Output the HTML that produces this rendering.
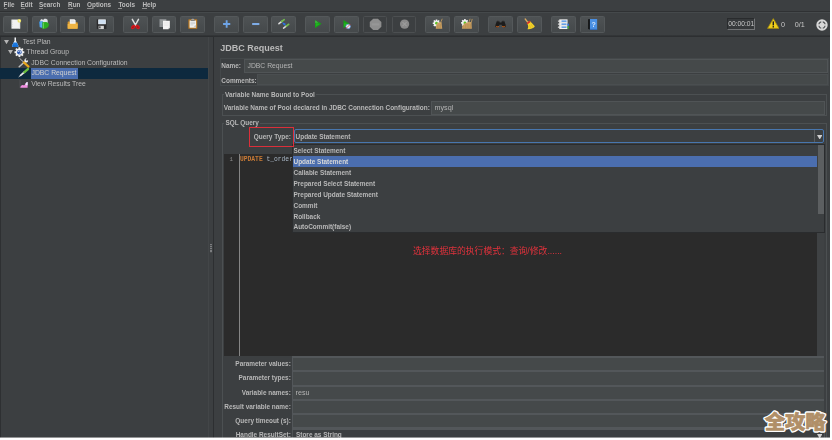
<!DOCTYPE html>
<html><head><meta charset="utf-8"><title>JMeter</title>
<style>
*{box-sizing:border-box;margin:0;padding:0}
html,body{width:832px;height:440px;overflow:hidden;background:#fff}
body{position:relative;font-family:"Liberation Sans","Noto Sans CJK SC",sans-serif;color:#bbb}
#app{position:absolute;left:0;top:0;width:830px;height:438px;background:#3c3f41;overflow:hidden;filter:blur(0.4px)}
.a{position:absolute;white-space:nowrap;line-height:1}
.b{font-weight:bold}
.menu{font-size:6.4px;font-weight:bold;color:#bcbcbc;top:2.2px}
.menu u{text-decoration:none;border-bottom:0.7px solid #8e8e8e}
.tb{position:absolute;top:16px;height:16.5px;width:24.8px;background:linear-gradient(#4e5254,#45494b);border:0.7px solid #54585a;border-radius:1.5px}
.tb.dis{background:#3c3f41;border-color:#4c4f51}
.tb svg{position:absolute;left:0;top:0;width:100%;height:100%}
.tree{font-size:6.8px;color:#bbb}
.lbl{font-size:6.45px;font-weight:bold;color:#b8b8b8}
.fld{position:absolute;background:#45494a;border:0.8px solid #505456}
.val{font-size:6.8px;color:#b4b4b4}
.grp{position:absolute;border:0.8px solid #4c5052}
.it{font-size:6.45px;font-weight:bold;color:#b8b8b8;left:293.5px}
</style></head><body>
<div id="app">
<!-- menu bar -->
<span class="a menu" style="left:3.5px"><u>F</u>ile</span>
<span class="a menu" style="left:20.6px"><u>E</u>dit</span>
<span class="a menu" style="left:39px"><u>S</u>earch</span>
<span class="a menu" style="left:68px"><u>R</u>un</span>
<span class="a menu" style="left:87px"><u>O</u>ptions</span>
<span class="a menu" style="left:118.4px"><u>T</u>ools</span>
<span class="a menu" style="left:142.4px"><u>H</u>elp</span>
<div class="a" style="left:0;top:10.6px;width:830px;height:1.5px;background:#2f3133"></div><div class="a" style="left:0;top:12.1px;width:830px;height:0.8px;background:#45494b"></div>
<div class="a" style="left:0;top:34.5px;width:830px;height:2.4px;background:linear-gradient(#383b3d,#2b2d2f 60%,#2e3032)"></div>

<!-- toolbar buttons -->
<div class="tb" style="left:3.0px"><svg viewBox="0 0 24.8 16.5"><rect x="7.9" y="2.9" width="10" height="10.4" fill="#f2f2f2"/><path d="M8.8 4.6h0.9M8.8 6.6h0.9M8.8 8.6h0.9M8.8 10.6h0.9" stroke="#c4c4c4" stroke-width="0.6"/><path d="M16.9 3v10.2" stroke="#dcdcdc" stroke-width="0.8"/><circle cx="16.9" cy="4.3" r="2.1" fill="#e9de62"/><circle cx="17" cy="4.2" r="0.9" fill="#fffbd8"/></svg></div>
<div class="tb" style="left:32.0px"><svg viewBox="0 0 24.8 16.5"><path d="M7.3 6.2l.5-2.7 1.6-1.3 1.5 1.3 1.4-1.5 2 .1 1.7 1 .3 3.6z" fill="#dfe3e6"/><path d="M6.4 5.2l4.2-.4v7.6l-3.4-.6z" fill="#2b8be2"/><path d="M7.6 5.6v6M9 5.4v6.6" stroke="#8fd0f8" stroke-width="0.6"/><path d="M10.1 6l4.2-.3c2.8.1 3.7 2.5 2.9 4.4-.8 2-3.3 3.3-7.1 3.5z" fill="#2cae20"/><path d="M11.2 6.5v6.4" stroke="#86e468" stroke-width="0.9"/></svg></div>
<div class="tb" style="left:60.3px"><svg viewBox="0 0 24.8 16.5"><path d="M7 5.8c0-.5.3-.8.8-.8h1.6l.8 1h7.5c.5 0 .8.3.8.8v5.9c0 .5-.3.8-.8.8h-9.9c-.5 0-.8-.3-.8-.8z" fill="#d49428"/><path d="M9.4 2.7h5.3l1.4 1.4v5.6h-6.7z" fill="#f6f6f6"/><path d="M10.4 4.3h3.6M10.4 5.5h4.7" stroke="#c4c8cc" stroke-width="0.5"/><path d="M7 8.3c0-.4.3-.7.7-.7h10.2c.4 0 .7.3.6.7l-.3 4.4c0 .5-.3.8-.8.8h-9.6c-.5 0-.8-.3-.8-.8z" fill="#efb545"/></svg></div>
<div class="tb" style="left:88.9px"><svg viewBox="0 0 24.8 16.5"><rect x="7.1" y="2.5" width="11.1" height="11.2" rx="0.7" fill="#2a2b2d"/><rect x="8.8" y="2.7" width="8.6" height="5.5" fill="#f4f6f8"/><rect x="9.3" y="3.3" width="7.6" height="4.5" fill="#cfe0f2"/><rect x="9.2" y="10" width="6" height="3.7" fill="#d4d4d4"/><rect x="9.9" y="10.6" width="1.5" height="2.2" fill="#343638"/></svg></div>
<div class="tb" style="left:123.1px"><svg viewBox="0 0 24.8 16.5"><path d="M8.9 2.7L12.6 9.4M15.9 2.7L12.2 9.4" stroke="#dedede" stroke-width="1.7" stroke-linecap="round"/><ellipse cx="9.9" cy="11.4" rx="2.8" ry="2.1" transform="rotate(-35 9.9 11.4)" fill="#d4181c"/><ellipse cx="15" cy="11.4" rx="2.8" ry="2.1" transform="rotate(35 15 11.4)" fill="#d4181c"/><ellipse cx="9.7" cy="11.6" rx="1" ry="0.5" transform="rotate(-35 9.7 11.6)" fill="#8a1014"/><ellipse cx="15.2" cy="11.6" rx="1" ry="0.5" transform="rotate(35 15.2 11.6)" fill="#8a1014"/></svg></div>
<div class="tb" style="left:151.6px"><svg viewBox="0 0 24.8 16.5"><rect x="6.8" y="2.4" width="7.8" height="9" fill="#8e9294"/><path d="M8 4.2h5.4M8 5.7h5.4M8 7.2h2.6" stroke="#a6a9ab" stroke-width="0.5"/><path d="M10.8 4.4h7.8v7.7l-1.7 1.7h-6.1z" fill="#f4f4f4"/><path d="M12 6.4h5M12 7.9h5M12 9.4h5" stroke="#e0e0e0" stroke-width="0.5"/><path d="M18.6 12.1l-1.7 1.7v-1.7z" fill="#bdbdbd"/></svg></div>
<div class="tb" style="left:180.2px"><svg viewBox="0 0 24.8 16.5"><rect x="7.8" y="2.7" width="10.1" height="10.8" rx="0.8" fill="#b97822"/><rect x="9.2" y="4" width="7.4" height="8.2" fill="#f0f0ee"/><path d="M10.2 6h5.4M10.2 7.5h5.4M10.2 9h3.2" stroke="#b4b8bc" stroke-width="0.6"/><path d="M13.8 10.4l2.8-1.2v3z" fill="#c4c4c4"/><path d="M10.9 4.1c0-1.3.7-2 1.95-2s1.95.7 1.95 2z" fill="#a2a2a2"/><rect x="10.6" y="3.5" width="4.5" height="1" fill="#7e7e7e"/></svg></div>
<div class="tb" style="left:214.4px"><svg viewBox="0 0 24.8 16.5"><path d="M12.7 3.8v8.3M8.6 7.95h8.2" stroke="#6ea4e6" stroke-width="2.1"/></svg></div>
<div class="tb" style="left:243.0px"><svg viewBox="0 0 24.8 16.5"><path d="M8.7 8h8.2" stroke="#7eace6" stroke-width="2.3"/></svg></div>
<div class="tb" style="left:271.4px"><svg viewBox="0 0 24.8 16.5"><path d="M7.3 7.6l3.4-2.6" stroke="#dcdcdc" stroke-width="1.7" stroke-linecap="round"/><path d="M10.5 5.1l2.8-2.1" stroke="#72bc4e" stroke-width="1.9" stroke-linecap="round"/><path d="M12.6 12.7l3.3-2.5" stroke="#dcdcdc" stroke-width="1.7" stroke-linecap="round"/><path d="M15.7 10.3l2.7-2" stroke="#72bc4e" stroke-width="1.9" stroke-linecap="round"/><path d="M10.9 6l3.9 1.5c.6 1.4-.7 2.6-2 2z" fill="#2a74e4"/></svg></div>
<div class="tb" style="left:305.4px"><svg viewBox="0 0 24.8 16.5"><path d="M9.7 3.3l7.5 4.5-7.5 5.1z" fill="#1a9c1a"/><path d="M10.5 6.5l4.5 1.5-4.5 3.2z" fill="#22c022" opacity="0.7"/><path d="M9.9 3.6l3.6 2.6-3.6 .6z" fill="#58b858" opacity="0.7"/></svg></div>
<div class="tb" style="left:334.0px"><svg viewBox="0 0 24.8 16.5"><path d="M9 3.3l7 4.5-7 5.1z" fill="#1a9c1a"/><path d="M9.8 6.5l4 1.5-4 3z" fill="#22c022" opacity="0.7"/><circle cx="14.4" cy="10.8" r="2.6" fill="#e6eefa" stroke="#5a90dc" stroke-width="0.7"/><path d="M11.7 13.4l5.2-5.3" stroke="#d63030" stroke-width="0.8"/></svg></div>
<div class="tb dis" style="left:362.7px"><svg viewBox="0 0 24.8 16.5"><path d="M9.9 1.9h5.4l3.9 3.9v5.2l-3.9 3.9h-5.4l-3.9-3.9v-5.2z" fill="#8e8e8e"/><path d="M8.3 7.2h8.6v2.4h-8.6z" fill="#979797"/></svg></div>
<div class="tb dis" style="left:391.5px"><svg viewBox="0 0 24.8 16.5"><circle cx="12.6" cy="8.1" r="5.3" fill="#8a8a8a"/><path d="M10.3 5.8l4.6 4.6M14.9 5.8l-4.6 4.6" stroke="#9c9c9c" stroke-width="1.3"/></svg></div>
<div class="tb" style="left:425.4px"><svg viewBox="0 0 24.8 16.5"><g transform="translate(11.4 7.1)"><circle r="3.2" fill="#f2f2f2"/><g stroke="#f2f2f2" stroke-width="1.8"><path d="M0-4.3V4.3M-4.3 0H4.3M-3.05-3.05L3.05 3.05M-3.05 3.05L3.05-3.05"/></g><circle r="1.6" fill="#5cc428"/></g><path d="M17.9 2l-1.7 4" stroke="#c8a060" stroke-width="0.9"/><path d="M12.3 6.6l4.8-1 .8 7.9h-7.4l.4-3.5z" fill="#c89e62"/><path d="M12.6 9.5v3.8M14.3 8.5v4.8M16 8v5.3" stroke="#ac8244" stroke-width="0.5"/></svg></div>
<div class="tb" style="left:454.0px"><svg viewBox="0 0 24.8 16.5"><g transform="translate(10.7 6.7)"><circle r="3.2" fill="#f2f2f2"/><g stroke="#f2f2f2" stroke-width="1.8"><path d="M0-4.3V4.3M-4.3 0H4.3M-3.05-3.05L3.05 3.05M-3.05 3.05L3.05-3.05"/></g><circle r="1.6" fill="#5cc428"/></g><path d="M16.6 2l-1.3 4M19 2.2l-1 4" stroke="#c8a060" stroke-width="0.9"/><path d="M10.4 7l4.2-1.2 3.6-.2.4 7.9h-11.3l.5-3.6z" fill="#c89e62"/><path d="M9.5 10v3.3M11.4 8.5v4.8M13.3 8v5.3M15.2 8v5.3M17 8v5.3" stroke="#ac8244" stroke-width="0.5"/></svg></div>
<div class="tb" style="left:488.2px"><svg viewBox="0 0 24.8 16.5"><path d="M8.4 4.6c.3-1 2.3-1 2.6 0l.6 1.6h2l.6-1.6c.3-1 2.3-1 2.6 0l2 5.4c.6 2-3.8 2.6-4.4.6l-.5-1.7h-2.6l-.5 1.7c-.6 2-5 1.4-4.4-.6z" fill="#1c1c1c"/><path d="M7.2 10.4c.8 1 2.7 1 3.5.2M14.5 10.6c.8.8 2.7.8 3.5-.2" stroke="#e06a18" stroke-width="1.1" fill="none"/><path d="M9 4.5h1.6M14.6 4.5h1.6" stroke="#6a6a6a" stroke-width="0.7"/></svg></div>
<div class="tb" style="left:516.9px"><svg viewBox="0 0 24.8 16.5"><path d="M7.6 2.3l3.7 4.7" stroke="#d8a860" stroke-width="1.5" stroke-linecap="round"/><path d="M9.4 6.7l3.4-2.3 5.8 6.2c-1 2-4.4 3.7-8.4 3.3 1.4-2.4 1-5-.8-7.2z" fill="#f2d22a"/><path d="M12.6 9l1.2 4.3M14.6 8.3l1.7 3.8" stroke="#d0a818" stroke-width="0.5"/><path d="M9.2 6.9l3.5-2.5 1.1 1.2-3.6 2.6z" fill="#d82828"/></svg></div>
<div class="tb" style="left:551.1px"><svg viewBox="0 0 24.8 16.5"><rect x="7.7" y="2.7" width="9.4" height="11" fill="#f6f6f6"/><path d="M6.8 4.6h2M6.8 8.1h2M6.8 11.6h2" stroke="#e0e0e0" stroke-width="1.5" stroke-linecap="round"/><path d="M10.2 4.6h5.8M10.2 8.1h5.8M10.2 11.6h5.8" stroke="#3a84e0" stroke-width="1.5"/><path d="M7.7 6.3h9.4M7.7 9.8h9.4" stroke="#c8c8c8" stroke-width="0.5"/><rect x="17" y="7.6" width="1.8" height="2.4" fill="#2a70d8"/><rect x="17" y="10.4" width="1.8" height="2.8" fill="#3aa838"/></svg></div>
<div class="tb" style="left:579.8px"><svg viewBox="0 0 24.8 16.5"><path d="M7.5 2.6l2.6-.2v12l-2.6-.8z" fill="#141414"/><rect x="9.6" y="2.3" width="8.2" height="12.1" fill="#4a90e4"/><path d="M9.6 13.5h8.2v0.9h-8.2z" fill="#2a68c0"/><text x="13.8" y="11.2" font-size="8" font-weight="bold" font-family="Liberation Sans, sans-serif" fill="#cfe2fa" text-anchor="middle">?</text></svg></div>

<!-- timer etc -->
<div class="a" style="left:726.5px;top:18.2px;width:28.5px;height:11.9px;background:#36393b;border:1px solid;border-color:#292b2d #737577 #737577 #292b2d"></div>
<span class="a" style="left:728.2px;top:20.8px;font-size:6.7px;color:#c8c8c8">00:00:01</span>
<svg class="a" style="left:766.5px;top:18.4px" width="12.6" height="11" viewBox="0 0 12.6 11"><path d="M6.3 0.6 L12.1 10.4 L0.5 10.4 Z" fill="#efcf1c" stroke="#9a8410" stroke-width="0.8" stroke-linejoin="round"/><rect x="5.6" y="3.4" width="1.4" height="4" fill="#1c1c1c"/><rect x="5.6" y="8.1" width="1.4" height="1.4" fill="#1c1c1c"/></svg>
<span class="a" style="left:781px;top:21.4px;font-size:7.2px;color:#c8c8c8">0</span>
<span class="a" style="left:794.8px;top:21.4px;font-size:7.2px;color:#c8c8c8">0/1</span>
<svg class="a" style="left:816px;top:18.6px" width="12" height="12" viewBox="0 0 12 12"><circle cx="6" cy="6" r="5.7" fill="#d8d8d8"/><circle cx="6" cy="6" r="3.1" fill="none" stroke="#55585a" stroke-width="1.1"/><path d="M6 1.2V4.2M6 7.8V10.8M1.2 6H4.2M7.8 6H10.8" stroke="#d8d8d8" stroke-width="1.5"/></svg>

<!-- tree -->
<div class="a" style="left:0;top:36.5px;width:1px;height:402px;background:#2e3032"></div>
<div class="a" style="left:0;top:68px;width:207.6px;height:10.5px;background:#0d293e"></div>
<div class="a" style="left:30.7px;top:68px;width:47.3px;height:10.5px;background:#4b6eaf"></div>
<span class="a tree" style="left:22.7px;top:39px">Test Plan</span>
<span class="a tree" style="left:26.6px;top:49px">Thread Group</span>
<span class="a tree" style="left:31.2px;top:60px">JDBC Connection Configuration</span>
<span class="a tree" style="left:31.5px;top:70px;color:#d0d0d0">JDBC Request</span>
<span class="a tree" style="left:31.2px;top:81px">View Results Tree</span>
<svg class="a" style="left:3.6px;top:39.6px" width="5" height="4.2" viewBox="0 0 5 4.2"><path d="M0 0H5L2.5 4.2Z" fill="#b4b4b4"/></svg>
<svg class="a" style="left:8px;top:49.8px" width="5" height="4.2" viewBox="0 0 5 4.2"><path d="M0 0H5L2.5 4.2Z" fill="#b4b4b4"/></svg>
<svg class="a" style="left:0;top:36px" width="40" height="56" viewBox="0 36 40 56">
<!-- flask -->
<path d="M14.5 37.4h1.5v3.4l2.3 4.7c.4.8 0 1.4-.8 1.4h-4.6c-.8 0-1.2-.6-.8-1.4l2.4-4.7z" fill="#eef2f6"/>
<path d="M13.6 42.6h3.3l1.4 2.9c.4.8 0 1.4-.8 1.4h-4.6c-.8 0-1.2-.6-.8-1.4z" fill="#1b7ae2"/>
<path d="M13 45.8c1.5.6 3 .6 4.5 0" stroke="#0f56b8" stroke-width="0.6" fill="none"/>
<!-- gear -->
<g transform="translate(19.4 52.2)"><circle r="3.6" fill="#f0f0f0"/><g stroke="#f0f0f0" stroke-width="1.9"><path d="M0-4.9V4.9M-4.9 0H4.9M-3.5-3.5L3.5 3.5M-3.5 3.5L3.5-3.5"/></g><circle r="2.3" fill="#2a56ac"/><path d="M-1.2-.2a1.3 1.3 0 1 1 1.4 1.5" stroke="#e4ecfa" stroke-width="0.8" fill="none"/></g>
<!-- tools -->
<path d="M19.2 66.7l6.2-5.6" stroke="#bcbcbc" stroke-width="1.5" stroke-linecap="round"/>
<path d="M24.6 61.6c-.8-1.6.3-3.4 2.1-3.3l-1.1 1.4.8 1.1 1.7-.6c.3 1.7-1.5 2.9-3 2.1z" fill="#ececec"/>
<path d="M19.8 58.5l4 3.8" stroke="#c4c4c4" stroke-width="1" stroke-linecap="round"/>
<path d="M23.8 62.4l4.7 4.2" stroke="#e8a61c" stroke-width="2.1" stroke-linecap="round"/>
<!-- pipette -->
<path d="M19 76.7l2-1.7" stroke="#d0d0d0" stroke-width="0.9" stroke-linecap="round"/>
<path d="M20.6 75.4l3.9-3.4" stroke="#e6e6e6" stroke-width="1.7" stroke-linecap="round"/>
<path d="M24.4 72.2l3.5-3.1" stroke="#6cc040" stroke-width="2.4" stroke-linecap="round"/>
<!-- results -->
<path d="M20 79.8v8.2" stroke="#5c5f61" stroke-width="0.5"/>
<path d="M20.3 87.8c.3-2 1.6-3 3-2.6 1 .3 1.5-.4 2.2-1.8.5-1 1.4-1.6 2.1-1.5v5.9z" fill="#f08ee0"/>
<path d="M25.3 84.2c.4-1.3 1.3-2.4 2.3-2.3v3.3c-.8.3-1.7-.1-2.3-1z" fill="#e6f0fc"/>
</svg>

<!-- divider -->
<div class="a" style="left:207.6px;top:36.6px;width:1.2px;height:402px;background:#434648"></div>
<div class="a" style="left:213.2px;top:35.6px;width:1px;height:403px;background:#2d2f31"></div>
<div class="a" style="left:213.2px;top:35.8px;width:617px;height:1.2px;background:#2d2f31"></div>
<div class="a" style="left:210px;top:244px;width:2px;height:8.6px;background:repeating-linear-gradient(#7c7e80 0 1.2px,#4a4d4f 1.2px 2.15px)"></div>

<!-- right panel -->
<span class="a b" style="left:220.2px;top:43.6px;font-size:9px;color:#bababa">JDBC Request</span>
<div class="grp" style="left:219.8px;top:57.6px;width:609px;height:28.8px;border-color:#44484a"></div>
<span class="a lbl" style="left:221.3px;top:63px">Name:</span>
<div class="fld" style="left:244px;top:58.8px;width:584px;height:14px"></div>
<span class="a val" style="left:247.5px;top:63px">JDBC Request</span>
<span class="a lbl" style="left:221.3px;top:78px">Comments:</span>
<div class="fld" style="left:257.1px;top:74.4px;width:571px;height:11px;border-color:#4a4e50"></div>

<div class="grp" style="left:221.6px;top:93.8px;width:605.6px;height:22.6px"></div>
<span class="a lbl" style="left:224.1px;top:92px;background:#3c3f41;padding:0 1px;line-height:0.8">Variable Name Bound to Pool</span>
<span class="a lbl" style="left:223.8px;top:105px">Variable Name of Pool declared in JDBC Connection Configuration:</span>
<div class="fld" style="left:430.8px;top:101.2px;width:394px;height:13.4px"></div>
<span class="a val" style="left:434.5px;top:104.4px;font-size:7.2px">mysql</span>

<div class="grp" style="left:221.6px;top:123px;width:605.6px;height:330px"></div>
<span class="a lbl" style="left:224.4px;top:120.4px;background:#3c3f41;padding:0 1px;line-height:0.8">SQL Query</span>

<!-- editor -->
<div class="a" style="left:224px;top:154px;width:592.8px;height:202px;background:#2b2b2b"></div>
<div class="a" style="left:816.8px;top:154px;width:7.2px;height:202px;background:#3f4244"></div>
<div class="a" style="left:239.1px;top:154px;width:0.9px;height:202px;background:#858585"></div>
<span class="a" style="left:229.4px;top:157.2px;font-size:5.8px;font-family:'Liberation Mono','DejaVu Sans Mono',monospace;color:#8a8a8a">1</span>
<span class="a" style="left:240px;top:156.8px;font-size:6.3px;font-family:'Liberation Mono','DejaVu Sans Mono',monospace;color:#a9b7c6"><b style="color:#c87a36">UPDATE</b> t_order SET status = 1</span>
<span class="a" style="left:413px;top:246.6px;font-size:8.8px;color:#e0323c;font-family:'Liberation Sans','Noto Sans CJK SC',sans-serif">选择数据库的执行模式：查询/修改......</span>

<!-- query type -->
<span class="a lbl" style="left:253.8px;top:133.6px">Query Type:</span>
<div class="a" style="left:293.6px;top:128.8px;width:530.6px;height:14.4px;background:#3c3f41;border:1.3px solid #4876ae;border-radius:2px"></div>
<div class="a" style="left:813.5px;top:130px;width:0.7px;height:12.4px;background:#5a5d5f"></div>
<svg class="a" style="left:816.8px;top:134.6px" width="5.4" height="4.6" viewBox="0 0 5.4 4.6"><path d="M0 0H5.4L2.7 4.6Z" fill="#d0d0d0"/></svg>
<span class="a lbl" style="left:295.6px;top:133.6px">Update Statement</span>

<!-- popup -->
<div class="a" style="left:292px;top:144px;width:532.6px;height:89px;background:#3c3f41;border:0.9px solid #2a2c2e"></div>
<div class="a" style="left:292.9px;top:156.2px;width:524.2px;height:10.8px;background:#4b6eaf"></div>
<div class="a" style="left:818.4px;top:145px;width:5.4px;height:69.4px;background:#5c5f61"></div>
<span class="a it" style="top:148px">Select Statement</span>
<span class="a it" style="top:159px;color:#d8d8d8">Update Statement</span>
<span class="a it" style="top:170px">Callable Statement</span>
<span class="a it" style="top:181px">Prepared Select Statement</span>
<span class="a it" style="top:192px">Prepared Update Statement</span>
<span class="a it" style="top:203px">Commit</span>
<span class="a it" style="top:214px">Rollback</span>
<span class="a it" style="top:224.4px">AutoCommit(false)</span>

<div class="a" style="left:248.7px;top:126.5px;width:45.5px;height:20px;border:1.7px solid #dc2f3a"></div>
<!-- bottom fields -->
<span class="a lbl" style="right:539.2px;top:361px">Parameter values:</span>
<span class="a lbl" style="right:539.2px;top:375.2px">Parameter types:</span>
<span class="a lbl" style="right:539.2px;top:389.6px">Variable names:</span>
<span class="a lbl" style="right:539.2px;top:403.8px">Result variable name:</span>
<span class="a lbl" style="right:539.2px;top:418px">Query timeout (s):</span>
<span class="a lbl" style="right:539.2px;top:432.4px">Handle ResultSet:</span>
<div class="a" style="left:292px;top:356.0px;width:532.4px;height:73.9px;background:#53575a"></div>
<div class="a" style="left:292.8px;top:358.0px;width:530.8px;height:12.4px;background:#45494a"></div>
<div class="a" style="left:292.8px;top:372.4px;width:530.8px;height:12.4px;background:#45494a"></div>
<div class="a" style="left:292.8px;top:386.8px;width:530.8px;height:12.3px;background:#45494a"></div>
<div class="a" style="left:292.8px;top:401.1px;width:530.8px;height:12.1px;background:#45494a"></div>
<div class="a" style="left:292.8px;top:415.2px;width:530.8px;height:12.3px;background:#45494a"></div>
<div class="a" style="left:292px;top:429.9px;width:0.8px;height:9px;background:#505456"></div><div class="a" style="left:823.6px;top:429.9px;width:0.8px;height:9px;background:#505456"></div>
<span class="a val" style="left:295.6px;top:389.4px;font-size:7.2px">resu</span>
<span class="a lbl" style="left:296px;top:432.4px">Store as String</span>
<svg class="a" style="left:816.8px;top:433.6px" width="5.4" height="4.6" viewBox="0 0 5.4 4.6"><path d="M0 0H5.4L2.7 4.6Z" fill="#d0d0d0"/></svg>

<!-- watermark -->
</div>
<svg class="a" style="left:756px;top:402px" width="80" height="40" viewBox="0 0 80 40"><g transform="translate(0 26.8) scale(1 .93) translate(0 -26.8)" font-family="Liberation Sans, Noto Sans CJK SC, sans-serif" font-weight="900" font-size="20.4" stroke-linejoin="round" letter-spacing="-0.2"><text x="8.8" y="26.8" fill="#fff" stroke="#fff" stroke-width="3.5">全攻略</text><text x="8.8" y="26.8" fill="#b08f68" stroke="#b08f68" stroke-width="0.7">全攻略</text></g></svg>
<div class="a" style="left:0;top:437px;width:830px;height:1px;background:rgba(255,255,255,.45)"></div>
</body></html>
